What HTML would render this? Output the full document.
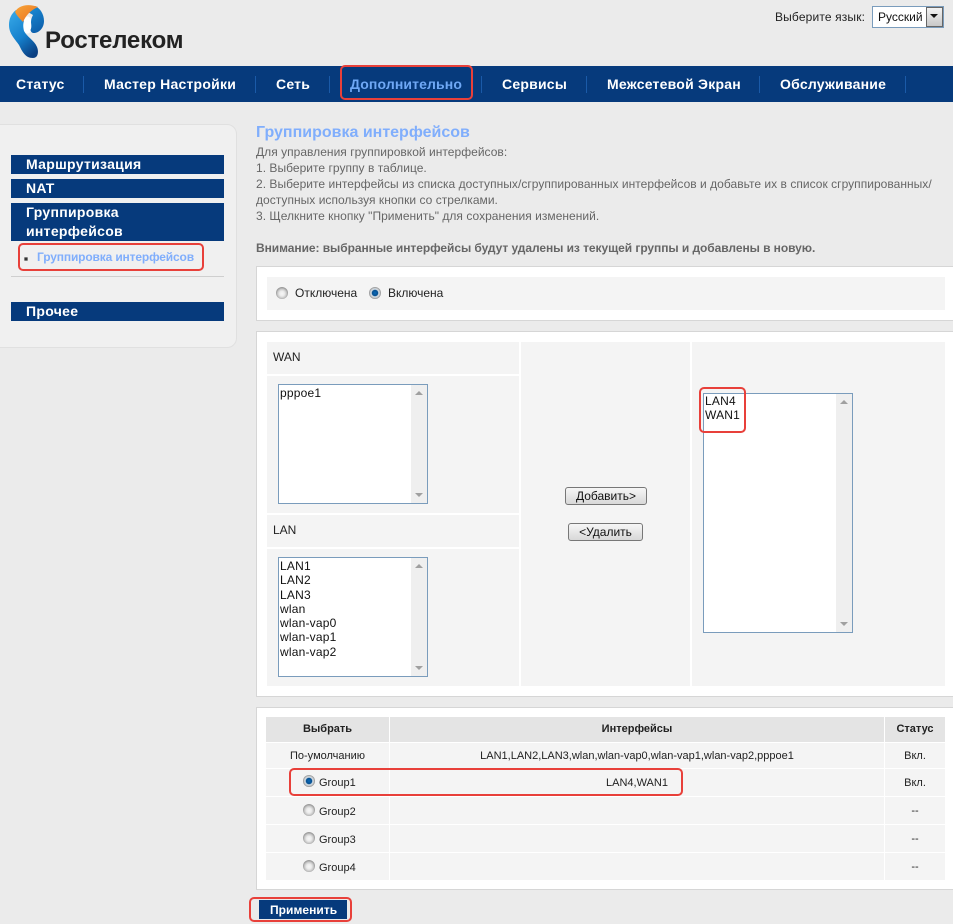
<!DOCTYPE html>
<html lang="ru"><head><meta charset="utf-8"><title>Ростелеком</title>
<style>
html,body{margin:0;padding:0}
body{width:953px;height:924px;overflow:hidden;background:#ebebeb;position:relative;font-family:"Liberation Sans","DejaVu Sans",sans-serif;font-size:12px;color:#222}
.a{position:absolute;white-space:nowrap}
.nav{left:0;top:66px;width:953px;height:36px;background:#063a7c}
.nt{top:76px;font-size:14px;line-height:16px;font-weight:bold;color:#fff;letter-spacing:.23px}
.sep{top:76px;width:1px;height:17px;background:#1a5aa8}
.side{left:-10px;top:124px;width:245px;height:222px;background:#f0f0f0;border:1px solid #e0e0e0;border-radius:10px}
.si{left:11px;width:198px;padding-left:15px;background:#063a7c;color:#fff;font-weight:bold;font-size:14px;line-height:19px;letter-spacing:.3px}
.panel{left:256px;width:720px;background:#fff;border:1px solid #d6d6d6;box-sizing:border-box}
.c{background:#f4f4f4}
.list{background:#fff;border:1px solid #7a9cbc;box-sizing:border-box;overflow:hidden}
.list div.t{position:absolute;left:1px;top:1px;font-size:12px;line-height:14.3px;color:#111;white-space:pre;letter-spacing:.2px}
.sb{position:absolute;right:0;top:0;bottom:0;width:16px;background:#efefef}
.up,.dn{position:absolute;left:4px;width:0;height:0;border-left:4px solid transparent;border-right:4px solid transparent}
.up{top:6px;border-bottom:4px solid #a0a0a0}
.dn{bottom:6px;border-top:4px solid #a0a0a0}
.btn{border:1px solid #777;border-radius:3px;box-sizing:border-box;background:linear-gradient(#f6f6f6,#d8d8d8);font-size:12px;line-height:16px;text-align:center;color:#111}
.radio{width:12px;height:12px;border-radius:50%;background:radial-gradient(circle at 50% 55%,#f6f6f6 0,#ececec 2.5px,#c8c8c8 4.5px,#9a9a9a 6px)}
.radio.on{background:radial-gradient(circle at 50% 50%,#0a6ab8 0,#064f90 2.8px,#e0e6ea 3.8px,#c0c4c8 4.8px,#8e8e8e 6px)}
.th{background:#e4e4e4;font-weight:bold;font-size:11px;line-height:25px;text-align:center;color:#222}
.td{background:#f4f4f4;font-size:11px;text-align:center;color:#222}
.red{border:2.5px solid #e8403a;border-radius:5px;box-sizing:border-box}
.intro{left:256px;font-size:12px;line-height:16px;color:#666;letter-spacing:.03px}
</style></head><body>

<svg class="a" style="left:0;top:0" width="50" height="62" viewBox="0 0 50 62">
<defs>
<linearGradient id="b" x1="0.2" y1="0" x2="0.7" y2="1"><stop offset="0" stop-color="#35a6e6"/><stop offset=".55" stop-color="#1580cc"/><stop offset="1" stop-color="#0a3f82"/></linearGradient>
<linearGradient id="r" x1="0" y1="0" x2="0.4" y2="1"><stop offset="0" stop-color="#1a8fd8"/><stop offset="1" stop-color="#0e62ae"/></linearGradient>
<linearGradient id="o" x1="0" y1="0" x2="1" y2="1"><stop offset="0" stop-color="#f6a53a"/><stop offset="1" stop-color="#ec701e"/></linearGradient>
</defs>
<ellipse cx="27.500" cy="25" rx="5" ry="8.500" fill="#fff"/>
<path fill="url(#b)" d="M16 10C11 14 9 19 9 25c0 9 6 14 10 20 3 6 6 13 14 13 5 0 6-6 4-11-3-7-10-10-13-16-1-4-1-7 0-10z"/>
<path fill="url(#r)" d="M35 6c5 2 9 8 9 15 0 7-5 12-10 12-2 0-3-1-3.500-3 1.500-3 .5-6 .5-8 0-3 1-5 2-7l-5-3z"/>
<path fill="url(#o)" d="M15 12C18 6 27 3 38 7c-7 3-12 8-15 15-3-3-6-6-8-10z"/>
</svg>
<div class="a" style="left:45px;top:26px;font-size:24px;line-height:30px;font-weight:bold;color:#222;letter-spacing:-.2px">Ростелеком</div>

<div class="a" style="left:775px;top:10px;font-size:12px;line-height:15px;color:#222;letter-spacing:.15px">Выберите язык:</div>
<div class="a" style="left:872px;top:6px;width:72px;height:22px;background:#fff;border:1px solid #7a9cbc;box-sizing:border-box">
<div class="a" style="left:5px;top:3px;font-size:12px;line-height:14px;color:#111">Русский</div>
<div class="a" style="right:0;top:0;width:17px;height:20px;box-sizing:border-box;border:1px solid #666;background:linear-gradient(#f2f2f2,#c8c8c8)"><div class="a" style="left:3px;top:6px;width:0;height:0;border-left:4px solid transparent;border-right:4px solid transparent;border-top:4px solid #111"></div></div>
</div>

<div class="a nav"></div>
<div class="a nt" style="left:16px">Статус</div><div class="a sep" style="left:83px"></div>
<div class="a nt" style="left:104px">Мастер Настройки</div><div class="a sep" style="left:255px"></div>
<div class="a nt" style="left:276px">Сеть</div><div class="a sep" style="left:329px"></div>
<div class="a nt" style="left:350px;color:#6fa8f5;letter-spacing:.12px">Дополнительно</div><div class="a sep" style="left:481px"></div>
<div class="a nt" style="left:502px">Сервисы</div><div class="a sep" style="left:586px"></div>
<div class="a nt" style="left:607px">Межсетевой Экран</div><div class="a sep" style="left:759px"></div>
<div class="a nt" style="left:780px">Обслуживание</div><div class="a sep" style="left:905px"></div>
<div class="a red" style="left:340px;top:65px;width:133px;height:35px"></div>

<div class="a side"></div>
<div class="a si" style="top:155px;height:19px">Маршрутизация</div>
<div class="a si" style="top:179px;height:19px">NAT</div>
<div class="a si" style="top:203px;height:38px">Группировка<br>интерфейсов</div>
<div class="a" style="left:24px;top:257px;width:4px;height:4px;background:radial-gradient(circle,#333 1px,#aaa 2px)"></div>
<div class="a" style="left:37px;top:250px;font-size:12px;line-height:15px;font-weight:bold;color:#80aefc;letter-spacing:-.15px">Группировка интерфейсов</div>
<div class="a red" style="left:18px;top:243px;width:186px;height:28px"></div>
<div class="a" style="left:11px;top:276px;width:213px;height:1px;background:#cfcfcf"></div>
<div class="a si" style="top:302px;height:19px">Прочее</div>

<div class="a" style="left:256px;top:123px;font-size:16px;line-height:20px;font-weight:bold;color:#80aefc">Группировка интерфейсов</div>
<div class="a intro" style="top:144px">Для управления группировкой интерфейсов:</div>
<div class="a intro" style="top:160px">1. Выберите группу в таблице.</div>
<div class="a intro" style="top:176px">2. Выберите интерфейсы из списка доступных/сгруппированных интерфейсов и добавьте их в список сгруппированных/</div>
<div class="a intro" style="top:192px">доступных используя кнопки со стрелками.</div>
<div class="a intro" style="top:208px">3. Щелкните кнопку "Применить" для сохранения изменений.</div>
<div class="a intro" style="top:240px;font-weight:bold;letter-spacing:-.06px">Внимание: выбранные интерфейсы будут удалены из текущей группы и добавлены в новую.</div>

<div class="a panel" style="top:266px;height:55px"></div>
<div class="a c" style="left:267px;top:277px;width:678px;height:33px"></div>
<div class="a radio" style="left:276px;top:287px"></div>
<div class="a" style="left:295px;top:286px;line-height:15px">Отключена</div>
<div class="a radio on" style="left:369px;top:287px"></div>
<div class="a" style="left:388px;top:286px;line-height:15px">Включена</div>

<div class="a panel" style="top:331px;height:366px"></div>
<div class="a c" style="left:267px;top:342px;width:252px;height:32px"></div>
<div class="a" style="left:273px;top:350px;line-height:15px">WAN</div>
<div class="a c" style="left:267px;top:376px;width:252px;height:137px"></div>
<div class="a list" style="left:278px;top:384px;width:150px;height:120px"><div class="t">pppoe1</div><div class="sb"><div class="up"></div><div class="dn"></div></div></div>
<div class="a c" style="left:267px;top:515px;width:252px;height:32px"></div>
<div class="a" style="left:273px;top:523px;line-height:15px">LAN</div>
<div class="a c" style="left:267px;top:549px;width:252px;height:137px"></div>
<div class="a list" style="left:278px;top:557px;width:150px;height:120px"><div class="t">LAN1
LAN2
LAN3
wlan
wlan-vap0
wlan-vap1
wlan-vap2</div><div class="sb"><div class="up"></div><div class="dn"></div></div></div>

<div class="a c" style="left:521px;top:342px;width:169px;height:344px"></div>
<div class="a btn" style="left:565px;top:487px;width:82px;height:18px">Добавить&gt;</div>
<div class="a btn" style="left:568px;top:523px;width:75px;height:18px">&lt;Удалить</div>

<div class="a c" style="left:692px;top:342px;width:253px;height:344px"></div>
<div class="a list" style="left:703px;top:393px;width:150px;height:240px"><div class="t" style="top:0">LAN4
WAN1</div><div class="sb"><div class="up"></div><div class="dn"></div></div></div>
<div class="a red" style="left:699px;top:387px;width:47px;height:46px"></div>

<div class="a panel" style="top:707px;height:183px"></div>
<div class="a th" style="left:266px;top:717px;width:123px;height:25px">Выбрать</div>
<div class="a th" style="left:390px;top:717px;width:494px;height:25px">Интерфейсы</div>
<div class="a th" style="left:885px;top:717px;width:60px;height:25px">Статус</div>

<div class="a td" style="left:266px;top:743px;width:123px;height:25px;line-height:26px">По-умолчанию</div>
<div class="a td" style="left:390px;top:743px;width:494px;height:25px;line-height:26px">LAN1,LAN2,LAN3,wlan,wlan-vap0,wlan-vap1,wlan-vap2,pppoe1</div>
<div class="a td" style="left:885px;top:743px;width:60px;height:25px;line-height:26px">Вкл.</div>

<div class="a td" style="left:266px;top:769px;width:123px;height:27px"></div>
<div class="a td" style="left:390px;top:769px;width:494px;height:27px;line-height:28px">LAN4,WAN1</div>
<div class="a td" style="left:885px;top:769px;width:60px;height:27px;line-height:28px">Вкл.</div>

<div class="a td" style="left:266px;top:797px;width:123px;height:27px"></div>
<div class="a td" style="left:390px;top:797px;width:494px;height:27px"></div>
<div class="a td" style="left:885px;top:797px;width:60px;height:27px;line-height:28px">--</div>

<div class="a td" style="left:266px;top:825px;width:123px;height:27px"></div>
<div class="a td" style="left:390px;top:825px;width:494px;height:27px"></div>
<div class="a td" style="left:885px;top:825px;width:60px;height:27px;line-height:28px">--</div>

<div class="a td" style="left:266px;top:853px;width:123px;height:27px"></div>
<div class="a td" style="left:390px;top:853px;width:494px;height:27px"></div>
<div class="a td" style="left:885px;top:853px;width:60px;height:27px;line-height:28px">--</div>

<div class="a radio on" style="left:303px;top:775px"></div><div class="a" style="left:319px;top:776px;font-size:11px;line-height:15px">Group1</div>
<div class="a radio" style="left:303px;top:804px"></div><div class="a" style="left:319px;top:805px;font-size:11px;line-height:15px">Group2</div>
<div class="a radio" style="left:303px;top:832px"></div><div class="a" style="left:319px;top:833px;font-size:11px;line-height:15px">Group3</div>
<div class="a radio" style="left:303px;top:860px"></div><div class="a" style="left:319px;top:861px;font-size:11px;line-height:15px">Group4</div>
<div class="a red" style="left:289px;top:768px;width:394px;height:28px"></div>

<div class="a" style="left:259px;top:900px;width:88px;height:19px;background:#063a7c;color:#fff;font-weight:bold;font-size:12px;line-height:20px;text-indent:11px;letter-spacing:.05px">Применить</div>
<div class="a red" style="left:249px;top:897px;width:103px;height:25px"></div>
</body></html>
